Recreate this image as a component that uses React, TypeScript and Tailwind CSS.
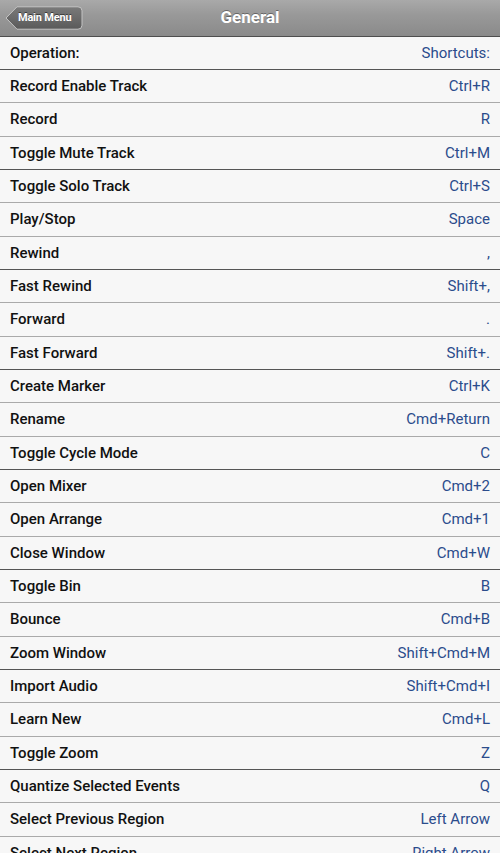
import React from 'react';

// keyboard shortcut list for the "General" section
const shortcuts: [string, string][] = [
    ['Operation:', 'Shortcuts:'],
    ['Record Enable Track', 'Ctrl+R'],
    ['Record', 'R'],
    ['Toggle Mute Track', 'Ctrl+M'],
    ['Toggle Solo Track', 'Ctrl+S'],
    ['Play/Stop', 'Space'],
    ['Rewind', ','],
    ['Fast Rewind', 'Shift+,'],
    ['Forward', '.'],
    ['Fast Forward', 'Shift+.'],
    ['Create Marker', 'Ctrl+K'],
    ['Rename', 'Cmd+Return'],
    ['Toggle Cycle Mode', 'C'],
    ['Open Mixer', 'Cmd+2'],
    ['Open Arrange', 'Cmd+1'],
    ['Close Window', 'Cmd+W'],
    ['Toggle Bin', 'B'],
    ['Bounce', 'Cmd+B'],
    ['Zoom Window', 'Shift+Cmd+M'],
    ['Import Audio', 'Shift+Cmd+I'],
    ['Learn New', 'Cmd+L'],
    ['Toggle Zoom', 'Z'],
    ['Quantize Selected Events', 'Q'],
    ['Select Previous Region', 'Left Arrow'],
    ['Select Next Region', 'Right Arrow'],
];

const BackButton: React.FC<{ label: string }> = ({ label }) => (
    <button className="relative flex items-center h-[24px] pl-[13px] pr-[8px] ml-[5px]">
        <svg className="absolute inset-0" width="78" height="24" viewBox="0 0 78 24">
            <defs>
                <linearGradient id="bb" x1="0" y1="0" x2="0" y2="1">
                    <stop offset="0" stopColor="#7a7a7a" />
                    <stop offset="1" stopColor="#5a5a5a" />
                </linearGradient>
            </defs>
            <path
                d="M1 12 L12 0.8 H73 Q77 0.8 77 4.8 V19.2 Q77 23.2 73 23.2 H12 Z"
                fill="url(#bb)"
                stroke="#c4c4c4"
                strokeWidth="1"
            />
        </svg>
        <span className="relative text-white text-[11px] font-bold tracking-[-0.2px] [text-shadow:0_-1px_0_rgba(0,0,0,0.5)]">
            {label}
        </span>
    </button>
);

export default function App() {
    return (
        <div className="w-[500px] h-[853px] overflow-hidden bg-[#f7f7f7] font-['Roboto',sans-serif]">
            {/* Header */}
            <div className="relative flex items-center h-[37px] border-b border-[#4e4e4e] bg-[linear-gradient(#a9a9a9,#999_40%,#8a8a8a)]">
                <BackButton label="Main Menu" />
                <h1 className="absolute inset-x-0 text-center text-white text-[17px] font-bold pointer-events-none [text-shadow:0_-1px_0_rgba(0,0,0,0.35)]">
                    General
                </h1>
            </div>

            {/* Rows */}
            <div className="flex flex-col">
                {shortcuts.map(([op, key], i) => (
                    <div
                        key={op}
                        className={`flex items-center justify-between px-[10px] border-b ${
                            i % 3 === 0 ? 'border-[#555]' : 'border-[#aaa]'
                        } ${i % 3 === 2 ? 'h-[34px]' : 'h-[33px]'}`}
                    >
                        <span className="text-[15px] font-medium text-[#111]">{op}</span>
                        <span className="text-[15px] text-[#2b4c8c]">{key}</span>
                    </div>
                ))}
            </div>
        </div>
    );
}
